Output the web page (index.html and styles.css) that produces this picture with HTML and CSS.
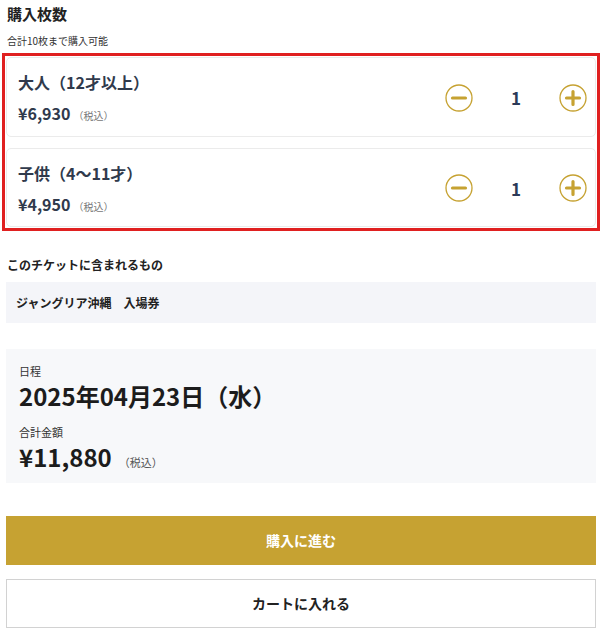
FILE: index.html
```html
<!DOCTYPE html>
<html lang="ja">
<head>
    <meta charset="UTF-8">
    <title>購入枚数</title>
    <link rel="stylesheet" href="styles.css">
</head>
<body>
<div class="page">
    <h2 class="title">購入枚数</h2>
    <p class="note">合計10枚まで購入可能</p>

    <div class="tickets">
        <div class="card">
            <div class="info">
                <div class="name">大人（12才以上）</div>
                <div class="price">¥6,930<span class="tax">（税込）</span></div>
            </div>
            <div class="stepper">
                <span class="btn">
                    <svg width="28" height="28" viewBox="0 0 28 28"><circle cx="14" cy="14" r="13" fill="none" stroke="#c6a232" stroke-width="1.3"/><path d="M7.5 14h13" stroke="#c6a232" stroke-width="3.2" stroke-linecap="round"/></svg>
                </span>
                <span class="count">1</span>
                <span class="btn">
                    <svg width="28" height="28" viewBox="0 0 28 28"><circle cx="14" cy="14" r="13" fill="none" stroke="#c6a232" stroke-width="1.3"/><path d="M7.5 14h13M14 7.5v13" stroke="#c6a232" stroke-width="3.2" stroke-linecap="round"/></svg>
                </span>
            </div>
        </div>
        <div class="card">
            <div class="info">
                <div class="name">子供（4〜11才）</div>
                <div class="price">¥4,950<span class="tax">（税込）</span></div>
            </div>
            <div class="stepper">
                <span class="btn">
                    <svg width="28" height="28" viewBox="0 0 28 28"><circle cx="14" cy="14" r="13" fill="none" stroke="#c6a232" stroke-width="1.3"/><path d="M7.5 14h13" stroke="#c6a232" stroke-width="3.2" stroke-linecap="round"/></svg>
                </span>
                <span class="count">1</span>
                <span class="btn">
                    <svg width="28" height="28" viewBox="0 0 28 28"><circle cx="14" cy="14" r="13" fill="none" stroke="#c6a232" stroke-width="1.3"/><path d="M7.5 14h13M14 7.5v13" stroke="#c6a232" stroke-width="3.2" stroke-linecap="round"/></svg>
                </span>
            </div>
        </div>
    </div>

    <h3 class="sub">このチケットに含まれるもの</h3>
    <div class="include">ジャングリア沖縄　入場券</div>

    <div class="summary">
        <div class="label">日程</div>
        <div class="big">2025年04月23日（水）</div>
        <div class="label label2">合計金額</div>
        <div class="big">¥11,880<span class="tax">（税込）</span></div>
    </div>

    <a class="button primary" href="#">購入に進む</a>
    <a class="button secondary" href="#">カートに入れる</a>
</div>
</body>
</html>
```

FILE: styles.css
```css
* {
    margin: 0;
    padding: 0;
    box-sizing: border-box;
}

body {
    font-family: "Noto Sans CJK JP", "Noto Sans", sans-serif;
    color: #222;
    background: #fff;
}

.page {
    width: 602px;
    padding: 0 6px;
}

.title {
    font-size: 15px;
    line-height: 20px;
    font-weight: bold;
    margin-top: 4px;
    padding-left: 1px;
}

.note {
    font-size: 10px;
    line-height: 14px;
    margin-top: 10px;
    padding-left: 1px;
    color: #333;
}

.tickets {
    display: flex;
    flex-direction: column;
    gap: 11px;
    margin-top: 9px;
    outline: 3px solid #e02020;
    outline-offset: 1px;
}

.card {
    display: flex;
    align-items: center;
    justify-content: space-between;
    height: 80px;
    border: 1px solid #ebebeb;
    border-radius: 5px;
    padding: 0 8px 0 11px;
}

.card:last-child {
    height: 79px;
}

.info {
    padding-top: 4px;
}

.name {
    font-size: 16px;
    line-height: 24px;
    font-weight: bold;
    color: #303a4c;
}

.price {
    font-size: 16px;
    line-height: 24px;
    font-weight: bold;
    color: #303a4c;
    margin-top: 7px;
}

.tax {
    font-size: 10px;
    font-weight: normal;
    color: #777;
    margin-left: 3px;
}

.stepper {
    display: flex;
    align-items: center;
    padding-top: 1px;
}

.btn {
    display: block;
    width: 28px;
    height: 28px;
}

.btn svg {
    display: block;
}

.count {
    width: 86px;
    text-align: center;
    font-size: 17px;
    font-weight: bold;
    color: #2c3a58;
}

.sub {
    font-size: 12px;
    line-height: 18px;
    font-weight: bold;
    margin-top: 29px;
    padding-left: 1px;
}

.include {
    background: #f4f5f9;
    height: 41px;
    margin-top: 8px;
    padding-left: 10px;
    font-size: 12px;
    font-weight: bold;
    line-height: 41px;
}

.summary {
    background: #f7f8fa;
    margin-top: 26px;
    height: 134px;
    padding: 14px 13px 0;
}

.label {
    font-size: 11px;
    line-height: 16px;
    color: #333;
}

.label2 {
    margin-top: 13px;
}

.big {
    font-size: 24px;
    line-height: 30px;
    margin-top: 2px;
    font-weight: bold;
    color: #1c1c1c;
}

.big .tax {
    font-size: 11px;
    margin-left: 7px;
    color: #555;
}

.button {
    display: block;
    height: 49px;
    line-height: 49px;
    text-align: center;
    font-size: 14px;
    font-weight: bold;
    text-decoration: none;
}

.primary {
    margin-top: 33px;
    background: #c6a232;
    color: #fff;
}

.secondary {
    margin-top: 14px;
    border: 1px solid #d2d2d2;
    line-height: 47px;
    color: #222;
}
```
